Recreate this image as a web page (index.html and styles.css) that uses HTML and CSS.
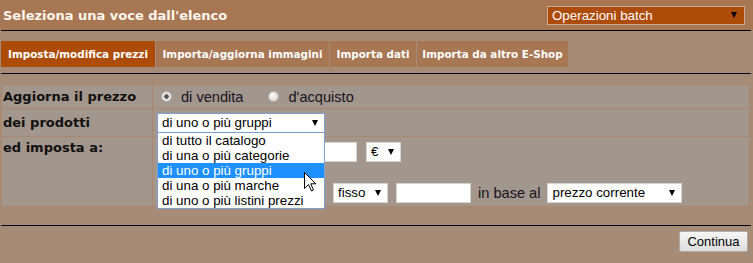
FILE: index.html
```html
<!DOCTYPE html>
<html lang="it">
<head>
  <meta charset="UTF-8">
  <title>Operazioni batch</title>
  <link rel="stylesheet" href="styles.css">
</head>
<body>

  <div class="topbar">
    <div class="page-title">Seleziona una voce dall'elenco</div>
    <div class="select batch">Operazioni batch<span class="arrow"></span></div>
  </div>
  <hr class="rule">

  <div class="tabs">
    <div class="tab active" style="width: 154px">Imposta/modifica prezzi</div>
    <div class="tab" style="width: 173px">Importa/aggiorna immagini</div>
    <div class="tab" style="width: 86px">Importa dati</div>
    <div class="tab" style="width: 151px">Importa da altro E-Shop</div>
  </div>
  <hr class="rule">

  <table class="form">
    <tr class="row-price">
      <td class="label">Aggiorna il prezzo</td>
      <td>
        <div class="radios">
          <label><input type="radio" name="tipo" checked> di vendita</label>
          <label><input type="radio" name="tipo"> d'acquisto</label>
        </div>
      </td>
    </tr>
    <tr class="row-products">
      <td class="label">dei prodotti</td>
      <td>
        <div class="select-wrap">
          <div class="select products">di uno o più gruppi<span class="arrow"></span></div>
          <!-- lista aperta -->
          <ul class="dropdown">
            <li>di tutto il catalogo</li>
            <li>di una o più categorie</li>
            <li class="hover">di uno o più gruppi</li>
            <li>di una o più marche</li>
            <li>di uno o più listini prezzi</li>
            <svg class="pointer" width="13" height="20" viewBox="0 0 13 20">
              <path d="M0.5 0.5 L0.5 16.5 L4.5 12.5 L7.5 19 L9.5 18 L6.8 11.8 L11.8 11.8 Z" fill="#fff" stroke="#000" stroke-width="1"/>
            </svg>
          </ul>
        </div>
      </td>
    </tr>
    <tr class="row-set">
      <td class="label top">ed imposta a:</td>
      <td class="set-cell">
        <div class="set-line">
          <input type="radio" name="modo" class="hidden-opt">
          <input type="text" class="field small">
          <div class="select currency">€<span class="arrow"></span></div>
        </div>
        <div class="set-line second">
          <input type="radio" name="modo" class="hidden-opt long">
          <div class="select kind">fisso<span class="arrow"></span></div>
          <input type="text" class="field medium">
          <span class="plain">in base al</span>
          <div class="select base">prezzo corrente<span class="arrow"></span></div>
        </div>
      </td>
    </tr>
  </table>

  <hr class="rule bottom">
  <div class="actions">
    <button class="continue">Continua</button>
  </div>

</body>
</html>
```

FILE: styles.css
```css
body {
  margin: 0;
  background: #a68b77;
  font-family: "Liberation Sans", Arial, sans-serif;
  color: #111;
  min-height: 263px;
}

.topbar {
  display: flex;
  justify-content: space-between;
  align-items: center;
  height: 30px;
  padding: 0 8px 0 3px;
  background: #a77653;
}

.page-title {
  font-family: "DejaVu Sans", Verdana, sans-serif;
  font-weight: bold;
  font-size: 13px;
  color: #fff7ef;
}

.rule {
  border: 0;
  border-top: 1px solid #000;
  height: 0;
  margin: 0 2px 0 1px;
}

/* tendine */
.select {
  position: relative;
  box-sizing: border-box;
  height: 20px;
  line-height: 18px;
  padding-left: 4px;
  background: #fff;
  border: 1px solid #d6d2ce;
  font-size: 13.33px;
  color: #000;
  white-space: nowrap;
}

.select .arrow {
  position: absolute;
  right: 6px;
  top: 6px;
  width: 0;
  height: 0;
  border-left: 3.5px solid transparent;
  border-right: 3.5px solid transparent;
  border-top: 6px solid #000;
}

.batch {
  width: 198px;
  height: 19px;
  line-height: 17px;
  background: #ad4b08;
  border-color: #c9ab97;
  color: #fff;
}

.batch .arrow {
  right: 7px;
  top: 5px;
}

/* schede */
.tabs {
  display: flex;
  gap: 1px;
  margin: 10px 0 6px 1px;
}

.tab {
  box-sizing: border-box;
  height: 26px;
  line-height: 26px;
  text-align: center;
  background: #a77653;
  color: #fff;
  font-family: "DejaVu Sans", Verdana, sans-serif;
  font-weight: bold;
  font-size: 10.4px;
  white-space: nowrap;
}

.tab.active {
  background: #ad4b08;
}

/* modulo */
.form {
  border-collapse: separate;
  border-spacing: 1px;
  background: #a9876e;
  margin: 10px 0 0 1px;
  width: 749px;
}

.form td {
  background: #a3968c;
  padding: 0 4px;
  vertical-align: middle;
}

.form td.label {
  width: 149px;
  padding: 0 0 0 1px;
  font-family: "DejaVu Sans", Verdana, sans-serif;
  font-weight: bold;
  font-size: 13px;
  color: #111;
  white-space: nowrap;
}

.form td.top {
  vertical-align: top;
  padding-top: 3px;
  line-height: 16px;
}

.row-price td { height: 23px; }
.row-products td { height: 27px; }

.radios {
  display: flex;
  align-items: center;
  font-size: 14.6px;
  color: #151525;
}

.radios label {
  display: flex;
  align-items: center;
  margin-right: 21px;
}

input[type="radio"] {
  appearance: none;
  box-sizing: border-box;
  width: 11px;
  height: 11px;
  margin: 0 9px 0 4px;
  border-radius: 50%;
  border: 1px solid #b9b4b0;
  background: radial-gradient(circle at 40% 35%, #ffffff, #d9d7d5 75%);
}

input[type="radio"]:checked {
  background: radial-gradient(circle, #555 0 2px, #eeeeee 2.5px, #d9d7d5 80%);
}

.select-wrap {
  position: relative;
  width: 168px;
}

.products {
  width: 168px;
  border-color: #7f9ed3;
}

.dropdown {
  position: absolute;
  top: 100%;
  left: 0;
  z-index: 10;
  box-sizing: border-box;
  width: 168px;
  margin: 0;
  padding: 0;
  list-style: none;
  background: #fff;
  border: 1px solid #7f9ed3;
  border-top: none;
}

.dropdown li {
  height: 15px;
  line-height: 15px;
  padding-left: 4px;
  font-size: 13.33px;
  color: #000;
  white-space: nowrap;
}

.dropdown li.hover {
  background: #1e90ff;
  color: #fff;
}

.pointer {
  position: absolute;
  left: 146px;
  top: 39px;
}

.form td.set-cell {
  vertical-align: top;
  padding: 5px 4px 3px;
}

.set-line {
  display: flex;
  align-items: center;
  height: 20px;
}

.set-line.second {
  margin-top: 21px;
}

/* opzioni coperte dalla lista aperta */
.set-line .hidden-opt {
  margin-right: 127px;
}

.set-line .hidden-opt.long {
  margin-right: 161px;
}

.field {
  box-sizing: border-box;
  height: 20px;
  margin: 0;
  border: 1px solid #d6d2ce;
  background: #fff;
}

.field.small {
  width: 58px;
  margin-right: 9px;
}

.field.medium {
  width: 75px;
  margin-left: 8px;
}

.currency { width: 35px; }
.kind { width: 55px; }
.base { width: 135px; }

.plain {
  margin: 0 7px;
  font-size: 14.6px;
  color: #151525;
}

.rule.bottom {
  margin-top: 18px;
}

.actions {
  display: flex;
  justify-content: flex-end;
  padding: 5px 5px 0 0;
}

.continue {
  box-sizing: border-box;
  width: 69px;
  height: 21px;
  padding: 0;
  font-family: "Liberation Sans", Arial, sans-serif;
  font-size: 13px;
  color: #000;
  background: linear-gradient(#f6f6f6, #dddddd);
  border: 1px solid #acacac;
  border-radius: 2px;
}
```
